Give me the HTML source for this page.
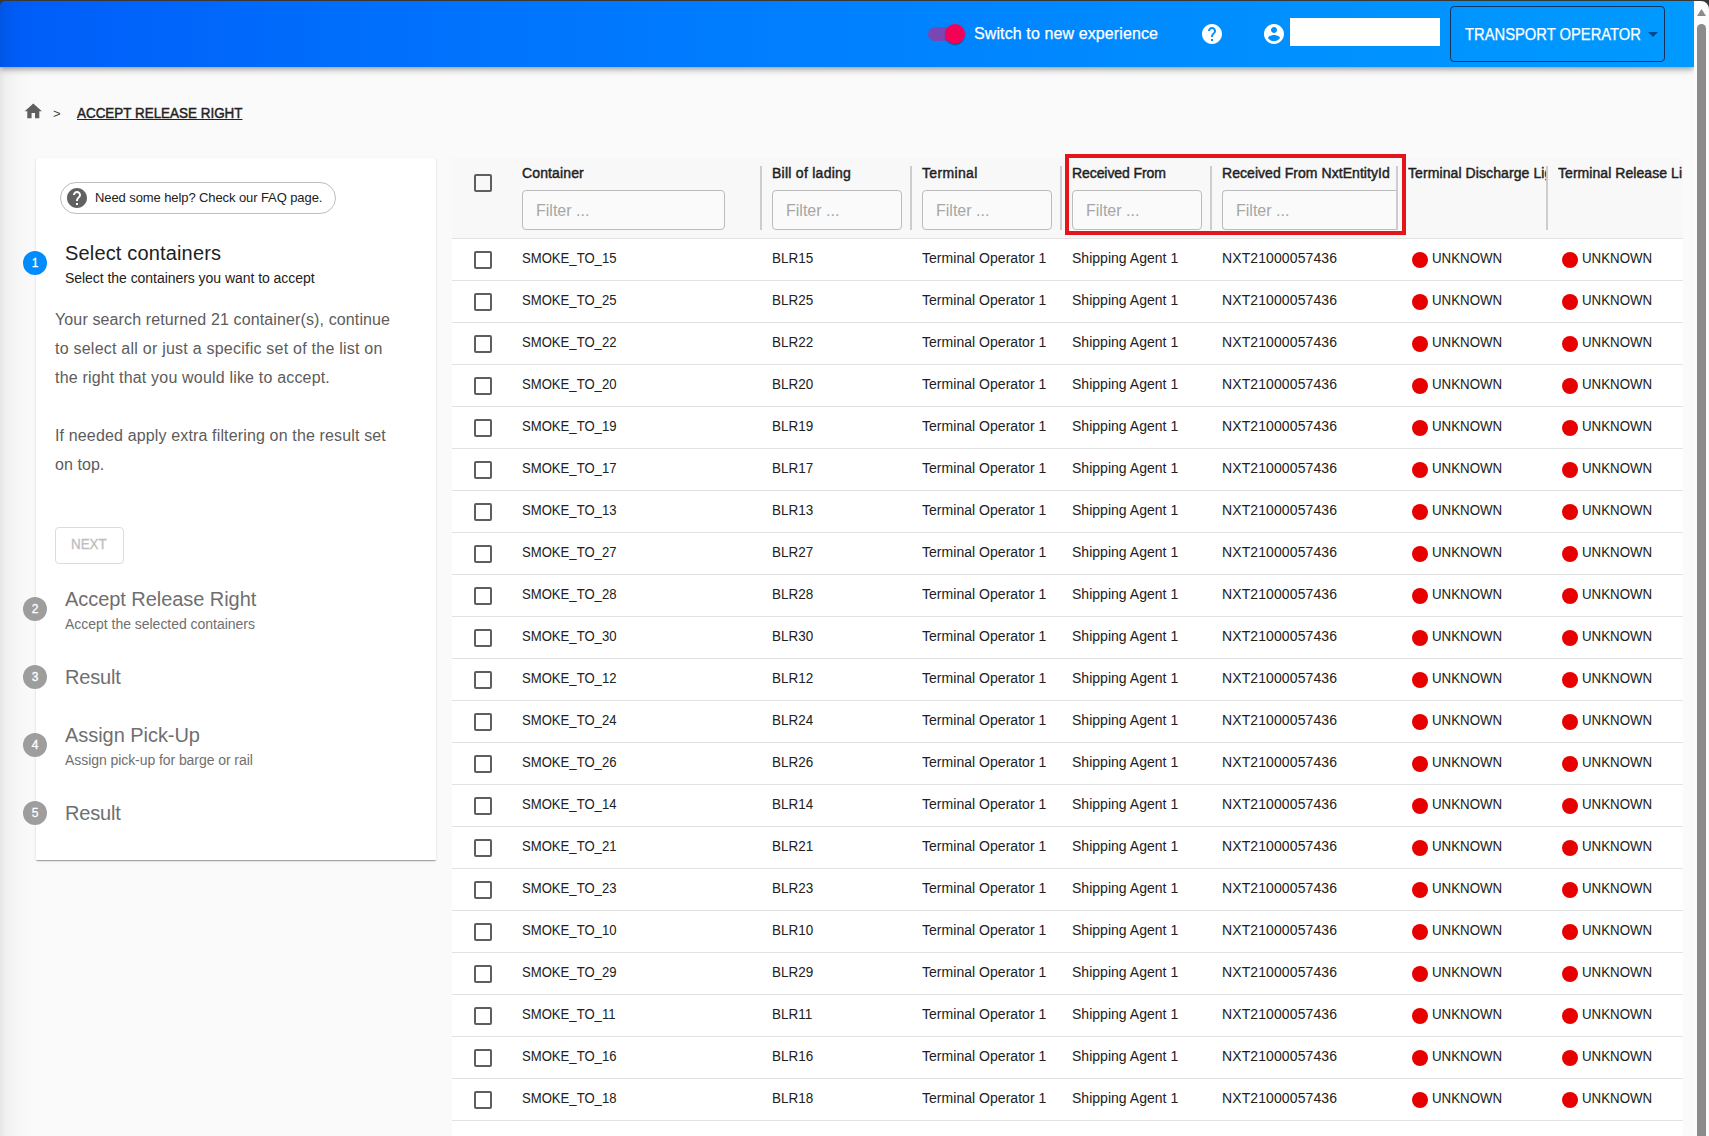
<!DOCTYPE html><html lang="en"><head><meta charset="utf-8"><title>Accept Release Right</title><style>
*{box-sizing:border-box;margin:0;padding:0}
html,body{width:1709px;height:1136px;overflow:hidden;background:#fafafa}
body{position:relative;font-family:"Liberation Sans",Arial,sans-serif;color:#212121;font-size:14px}
.abs{position:absolute}
.t{position:absolute;white-space:nowrap;line-height:1}
#hdr{left:0;top:0;width:1694px;height:67px;background:linear-gradient(90deg,#005df9 0%,#006ffc 22%,#007fff 47%,#008fff 74%,#009aff 100%);box-shadow:0 2px 4px -1px rgba(0,0,0,.2),0 4px 5px 0 rgba(0,0,0,.14),0 1px 10px 0 rgba(0,0,0,.12)}
#topline{left:0;top:0;width:1709px;height:1px;background:#3a3632;z-index:9}
#sb{left:1694px;top:0;width:15px;height:1136px;background:#fcfcfc;z-index:8}
#thumb{left:1697px;top:24px;width:9px;height:1120px;background:#8b8b8b;border-radius:5px;z-index:9}
#lshade{left:0;top:0;width:36px;height:1136px;background:linear-gradient(90deg,rgba(0,0,0,.085) 0,rgba(0,0,0,.045) 5px,rgba(0,0,0,.03) 10px,rgba(0,0,0,.013) 20px,rgba(0,0,0,0) 36px);z-index:7}
.w{color:#fff}
#panel{left:36px;top:158px;width:400px;height:702px;background:#fff;border-radius:4px 4px 0 0;box-shadow:0 2px 1px -1px rgba(0,0,0,.2),0 1px 1px 0 rgba(0,0,0,.14),0 1px 3px 0 rgba(0,0,0,.12)}
.circ{position:absolute;left:23px;width:24px;height:24px;border-radius:50%;background:#9e9e9e;color:#fff;font-size:12px;line-height:24px;text-align:center;-webkit-text-stroke:.3px #fff}
.g{color:#6f6f6f}
.p{color:#5c5c5c;font-size:16px}
#grid{left:452px;top:158px;width:1231px;height:978px;background:#fff;overflow:hidden}
#gh{left:0;top:0;width:1231px;height:81px;background:#f8f8f8;border-bottom:1px solid #e2e2e2}
.hl{position:absolute;-webkit-text-stroke:.45px #1f1f1f;font-size:14px;line-height:1;white-space:nowrap;color:#1f1f1f}
.sep{position:absolute;top:8px;width:2px;height:64px;background:#cdcdcd}
.fi{position:absolute;top:32px;height:40px;border:1px solid #bcbcbc;border-radius:4px;background:#fafafa;color:#a6a6a6;font-size:16px;line-height:40px;padding-left:13px;white-space:nowrap;overflow:hidden}
.cb{position:absolute;left:22px;width:18px;height:18px;border:2px solid #5e5e5e;border-radius:2px;background:#fff}
.row{position:absolute;left:0;width:1231px;height:42px;border-bottom:1px solid #e2e2e2}
.c{position:absolute;top:12px;font-size:14px;line-height:1;white-space:nowrap}
.dot{position:absolute;top:13px;width:16px;height:16px;border-radius:50%;background:#e60000}
#sw{letter-spacing:0.111px}#to{transform:scaleX(0.9221);transform-origin:0 0}#bc{transform:scaleX(0.9597);transform-origin:0 0}#chip{letter-spacing:-0.092px}#s1t{letter-spacing:0.161px}#s1s{letter-spacing:-0.046px}#p1{letter-spacing:0.125px}#p2{letter-spacing:0.234px}#p3{letter-spacing:0.182px}#p4{letter-spacing:0.147px}#p5{letter-spacing:0.060px}#nx{transform:scaleX(0.9560);transform-origin:0 0}#s2t{letter-spacing:-0.054px}#s2s{letter-spacing:-0.023px}#s3t{letter-spacing:-0.201px}#s4t{letter-spacing:-0.047px}#s4s{letter-spacing:-0.067px}#s5t{letter-spacing:-0.201px}.c0{transform:scaleX(0.9365);transform-origin:0 0}.c1{transform:scaleX(0.9623);transform-origin:0 0}.c2{letter-spacing:0.032px}.c3{letter-spacing:0.022px}.c4{letter-spacing:0.103px}.c5{transform:scaleX(0.9501);transform-origin:0 0}#h0{letter-spacing:0.125px}#h1{letter-spacing:0.262px}#h2{letter-spacing:0.342px}#h3{letter-spacing:-0.077px}#h4{letter-spacing:0.050px}#h5{letter-spacing:0.090px}#h6{letter-spacing:0.058px}</style></head><body>
<div id="hdr" class="abs"></div>
<div id="topline" class="abs"></div>
<svg class="abs" style="left:0;top:0;z-index:10" width="6" height="6"><path d="M0 0H6V1A5 5 0 0 0 0 6Z" fill="#3a3632"/></svg>
<svg class="abs" style="left:1700px;top:0;z-index:10" width="9" height="9"><path d="M0 0H9V9A8 8 0 0 0 1 1H0Z" fill="#363636"/></svg>
<div class="abs" style="left:928px;top:27px;width:36px;height:14px;border-radius:7px;background:#7a46b4"></div>
<div class="abs" style="left:945px;top:24px;width:20px;height:20px;border-radius:50%;background:#f50057;box-shadow:0 2px 1px -1px rgba(0,0,0,.2),0 1px 1px 0 rgba(0,0,0,.14),0 1px 3px 0 rgba(0,0,0,.12)"></div>
<div class="t w" id="sw" style="left:974px;top:26px;font-size:16px;-webkit-text-stroke:.25px #fff">Switch to new experience</div>
<svg class="abs" style="left:1200px;top:22px" width="24" height="24" viewBox="0 0 24 24"><path fill="#fff" d="M12 2C6.48 2 2 6.48 2 12s4.48 10 10 10 10-4.48 10-10S17.52 2 12 2zm1 17h-2v-2h2v2zm2.07-7.75l-.9.92C13.45 12.9 13 13.5 13 15h-2v-.5c0-1.1.45-2.100 1.170-2.830l1.240-1.260c.37-.36.59-.86.59-1.410 0-1.100-.9-2-2-2s-2 .9-2 2H8c0-2.210 1.790-4 4-4s4 1.790 4 4c0 .88-.36 1.680-.93 2.250z"/></svg>
<svg class="abs" style="left:1262px;top:22px" width="24" height="24" viewBox="0 0 24 24"><path fill="#fff" d="M12 2C6.48 2 2 6.48 2 12s4.48 10 10 10 10-4.48 10-10S17.52 2 12 2zm0 3c1.660 0 3 1.340 3 3s-1.340 3-3 3-3-1.340-3-3 1.340-3 3-3zm0 14.200c-2.500 0-4.710-1.280-6-3.220.03-1.990 4-3.080 6-3.080 1.990 0 5.970 1.090 6 3.080-1.290 1.940-3.500 3.220-6 3.220z"/></svg>
<div class="abs" style="left:1290px;top:18px;width:150px;height:28px;background:#fff"></div>
<div class="abs" style="left:1450px;top:6px;width:215px;height:56px;border:1px solid #15335f;border-radius:4px"></div>
<div class="t w" id="to" style="left:1465px;top:27px;font-size:16px;-webkit-text-stroke:.25px #fff">TRANSPORT OPERATOR</div>
<svg class="abs" style="left:1648px;top:32px" width="10" height="5"><path d="M0 0H10L5 5Z" fill="#004a8f"/></svg>
<div id="sb" class="abs"></div><div id="thumb" class="abs"></div>
<svg class="abs" style="left:1697px;top:9px;z-index:9" width="9" height="7"><path d="M0 7L4.5 0L9 7Z" fill="#8b8b8b"/></svg>
<div id="lshade" class="abs"></div>
<svg class="abs" style="left:23px;top:100.5px" width="20.6" height="20.6" viewBox="0 0 24 24"><path fill="#5f5f5f" d="M10 20v-6h4v6h5v-8h3L12 3 2 12h3v8z"/></svg>
<div class="t" style="left:53px;top:106.5px;font-size:13px;color:#444">&gt;</div>
<div class="t" id="bc" style="left:77px;top:106px;font-size:14px;-webkit-text-stroke:.45px #222;text-decoration:underline;color:#222">ACCEPT RELEASE RIGHT</div>
<div id="panel" class="abs"></div>
<div class="abs" style="left:60px;top:182px;width:276px;height:32px;border:1px solid #bdbdbd;border-radius:16px;background:#fff"></div>
<svg class="abs" style="left:65px;top:186px" width="24" height="24" viewBox="0 0 24 24"><path fill="#616161" d="M12 2C6.48 2 2 6.48 2 12s4.48 10 10 10 10-4.48 10-10S17.52 2 12 2zm1 17h-2v-2h2v2zm2.07-7.75l-.9.92C13.45 12.9 13 13.5 13 15h-2v-.5c0-1.1.45-2.100 1.170-2.830l1.240-1.260c.37-.36.59-.86.59-1.410 0-1.100-.9-2-2-2s-2 .9-2 2H8c0-2.210 1.790-4 4-4s4 1.790 4 4c0 .88-.36 1.680-.93 2.250z"/></svg>
<div class="t" id="chip" style="left:95px;top:191px;font-size:13px">Need some help? Check our FAQ page.</div>
<div class="circ" style="top:251px;background:#008cff">1</div>
<div class="t" id="s1t" style="left:65px;top:243px;font-size:20px">Select containers</div>
<div class="t" id="s1s" style="left:65px;top:271px;font-size:14px">Select the containers you want to accept</div>
<div class="t p" id="p1" style="left:55px;top:312px">Your search returned 21 container(s), continue</div>
<div class="t p" id="p2" style="left:55px;top:341px">to select all or just a specific set of the list on</div>
<div class="t p" id="p3" style="left:55px;top:370px">the right that you would like to accept.</div>
<div class="t p" id="p4" style="left:55px;top:428px">If needed apply extra filtering on the result set</div>
<div class="t p" id="p5" style="left:55px;top:457px">on top.</div>
<div class="abs" style="left:55px;top:527px;width:69px;height:37px;border:1px solid #dcdcdc;border-radius:4px"></div>
<div class="t" id="nx" style="left:71px;top:537px;font-size:14px;-webkit-text-stroke:.3px #bdbdbd;color:#bdbdbd">NEXT</div>
<div class="circ" style="top:597px">2</div>
<div class="t g" id="s2t" style="left:65px;top:589px;font-size:20px">Accept Release Right</div>
<div class="t g" id="s2s" style="left:65px;top:617px;font-size:14px">Accept the selected containers</div>
<div class="circ" style="top:665px">3</div>
<div class="t g" id="s3t" style="left:65px;top:667px;font-size:20px">Result</div>
<div class="circ" style="top:733px">4</div>
<div class="t g" id="s4t" style="left:65px;top:725px;font-size:20px">Assign Pick-Up</div>
<div class="t g" id="s4s" style="left:65px;top:753px;font-size:14px">Assign pick-up for barge or rail</div>
<div class="circ" style="top:801px">5</div>
<div class="t g" id="s5t" style="left:65px;top:803px;font-size:20px">Result</div>
<div id="grid" class="abs">
<div id="gh" class="abs">
<div class="cb" style="top:16px;background:#f8f8f8"></div>
<div class="hl" id="h0" style="left:70px;top:8px">Container</div>
<div class="fi" style="left:70px;width:203px">Filter ...</div>
<div class="sep" style="left:308px"></div>
<div class="hl" id="h1" style="left:320px;top:8px">Bill of lading</div>
<div class="fi" style="left:320px;width:130px">Filter ...</div>
<div class="sep" style="left:458px"></div>
<div class="hl" id="h2" style="left:470px;top:8px">Terminal</div>
<div class="fi" style="left:470px;width:130px">Filter ...</div>
<div class="sep" style="left:608px"></div>
<div class="hl" id="h3" style="left:620px;top:8px">Received From</div>
<div class="fi" style="left:620px;width:130px">Filter ...</div>
<div class="sep" style="left:758px"></div>
<div class="hl" id="h4" style="left:770px;top:8px">Received From NxtEntityId</div>
<div class="fi" style="left:770px;width:175px;border-right:0;border-radius:4px 0 0 4px">Filter ...</div>
<div class="sep" style="left:944px"></div>
<div class="abs" style="left:956px;top:4px;width:138px;height:24px;overflow:hidden"><div class="hl" style="left:0;top:4px"><span id="h5">Terminal Discharge Li</span><span>ght</span></div></div>
<div class="sep" style="left:1094px"></div>
<div class="abs" style="left:1106px;top:4px;width:124px;height:24px;overflow:hidden"><div class="hl" style="left:0;top:4px"><span id="h6">Terminal Release Li</span><span>ght</span></div></div>
</div>
<div class="row" style="top:81px"><div class="cb" style="top:12px"></div><div class="c c0" style="left:70px">SMOKE_TO_15</div><div class="c c1" style="left:320px">BLR15</div><div class="c c2" style="left:470px">Terminal Operator 1</div><div class="c c3" style="left:620px">Shipping Agent 1</div><div class="c c4" style="left:770px">NXT21000057436</div><div class="dot" style="left:960px"></div><div class="c c5" style="left:980px">UNKNOWN</div><div class="dot" style="left:1110px"></div><div class="c c5" style="left:1130px">UNKNOWN</div></div>
<div class="row" style="top:123px"><div class="cb" style="top:12px"></div><div class="c c0" style="left:70px">SMOKE_TO_25</div><div class="c c1" style="left:320px">BLR25</div><div class="c c2" style="left:470px">Terminal Operator 1</div><div class="c c3" style="left:620px">Shipping Agent 1</div><div class="c c4" style="left:770px">NXT21000057436</div><div class="dot" style="left:960px"></div><div class="c c5" style="left:980px">UNKNOWN</div><div class="dot" style="left:1110px"></div><div class="c c5" style="left:1130px">UNKNOWN</div></div>
<div class="row" style="top:165px"><div class="cb" style="top:12px"></div><div class="c c0" style="left:70px">SMOKE_TO_22</div><div class="c c1" style="left:320px">BLR22</div><div class="c c2" style="left:470px">Terminal Operator 1</div><div class="c c3" style="left:620px">Shipping Agent 1</div><div class="c c4" style="left:770px">NXT21000057436</div><div class="dot" style="left:960px"></div><div class="c c5" style="left:980px">UNKNOWN</div><div class="dot" style="left:1110px"></div><div class="c c5" style="left:1130px">UNKNOWN</div></div>
<div class="row" style="top:207px"><div class="cb" style="top:12px"></div><div class="c c0" style="left:70px">SMOKE_TO_20</div><div class="c c1" style="left:320px">BLR20</div><div class="c c2" style="left:470px">Terminal Operator 1</div><div class="c c3" style="left:620px">Shipping Agent 1</div><div class="c c4" style="left:770px">NXT21000057436</div><div class="dot" style="left:960px"></div><div class="c c5" style="left:980px">UNKNOWN</div><div class="dot" style="left:1110px"></div><div class="c c5" style="left:1130px">UNKNOWN</div></div>
<div class="row" style="top:249px"><div class="cb" style="top:12px"></div><div class="c c0" style="left:70px">SMOKE_TO_19</div><div class="c c1" style="left:320px">BLR19</div><div class="c c2" style="left:470px">Terminal Operator 1</div><div class="c c3" style="left:620px">Shipping Agent 1</div><div class="c c4" style="left:770px">NXT21000057436</div><div class="dot" style="left:960px"></div><div class="c c5" style="left:980px">UNKNOWN</div><div class="dot" style="left:1110px"></div><div class="c c5" style="left:1130px">UNKNOWN</div></div>
<div class="row" style="top:291px"><div class="cb" style="top:12px"></div><div class="c c0" style="left:70px">SMOKE_TO_17</div><div class="c c1" style="left:320px">BLR17</div><div class="c c2" style="left:470px">Terminal Operator 1</div><div class="c c3" style="left:620px">Shipping Agent 1</div><div class="c c4" style="left:770px">NXT21000057436</div><div class="dot" style="left:960px"></div><div class="c c5" style="left:980px">UNKNOWN</div><div class="dot" style="left:1110px"></div><div class="c c5" style="left:1130px">UNKNOWN</div></div>
<div class="row" style="top:333px"><div class="cb" style="top:12px"></div><div class="c c0" style="left:70px">SMOKE_TO_13</div><div class="c c1" style="left:320px">BLR13</div><div class="c c2" style="left:470px">Terminal Operator 1</div><div class="c c3" style="left:620px">Shipping Agent 1</div><div class="c c4" style="left:770px">NXT21000057436</div><div class="dot" style="left:960px"></div><div class="c c5" style="left:980px">UNKNOWN</div><div class="dot" style="left:1110px"></div><div class="c c5" style="left:1130px">UNKNOWN</div></div>
<div class="row" style="top:375px"><div class="cb" style="top:12px"></div><div class="c c0" style="left:70px">SMOKE_TO_27</div><div class="c c1" style="left:320px">BLR27</div><div class="c c2" style="left:470px">Terminal Operator 1</div><div class="c c3" style="left:620px">Shipping Agent 1</div><div class="c c4" style="left:770px">NXT21000057436</div><div class="dot" style="left:960px"></div><div class="c c5" style="left:980px">UNKNOWN</div><div class="dot" style="left:1110px"></div><div class="c c5" style="left:1130px">UNKNOWN</div></div>
<div class="row" style="top:417px"><div class="cb" style="top:12px"></div><div class="c c0" style="left:70px">SMOKE_TO_28</div><div class="c c1" style="left:320px">BLR28</div><div class="c c2" style="left:470px">Terminal Operator 1</div><div class="c c3" style="left:620px">Shipping Agent 1</div><div class="c c4" style="left:770px">NXT21000057436</div><div class="dot" style="left:960px"></div><div class="c c5" style="left:980px">UNKNOWN</div><div class="dot" style="left:1110px"></div><div class="c c5" style="left:1130px">UNKNOWN</div></div>
<div class="row" style="top:459px"><div class="cb" style="top:12px"></div><div class="c c0" style="left:70px">SMOKE_TO_30</div><div class="c c1" style="left:320px">BLR30</div><div class="c c2" style="left:470px">Terminal Operator 1</div><div class="c c3" style="left:620px">Shipping Agent 1</div><div class="c c4" style="left:770px">NXT21000057436</div><div class="dot" style="left:960px"></div><div class="c c5" style="left:980px">UNKNOWN</div><div class="dot" style="left:1110px"></div><div class="c c5" style="left:1130px">UNKNOWN</div></div>
<div class="row" style="top:501px"><div class="cb" style="top:12px"></div><div class="c c0" style="left:70px">SMOKE_TO_12</div><div class="c c1" style="left:320px">BLR12</div><div class="c c2" style="left:470px">Terminal Operator 1</div><div class="c c3" style="left:620px">Shipping Agent 1</div><div class="c c4" style="left:770px">NXT21000057436</div><div class="dot" style="left:960px"></div><div class="c c5" style="left:980px">UNKNOWN</div><div class="dot" style="left:1110px"></div><div class="c c5" style="left:1130px">UNKNOWN</div></div>
<div class="row" style="top:543px"><div class="cb" style="top:12px"></div><div class="c c0" style="left:70px">SMOKE_TO_24</div><div class="c c1" style="left:320px">BLR24</div><div class="c c2" style="left:470px">Terminal Operator 1</div><div class="c c3" style="left:620px">Shipping Agent 1</div><div class="c c4" style="left:770px">NXT21000057436</div><div class="dot" style="left:960px"></div><div class="c c5" style="left:980px">UNKNOWN</div><div class="dot" style="left:1110px"></div><div class="c c5" style="left:1130px">UNKNOWN</div></div>
<div class="row" style="top:585px"><div class="cb" style="top:12px"></div><div class="c c0" style="left:70px">SMOKE_TO_26</div><div class="c c1" style="left:320px">BLR26</div><div class="c c2" style="left:470px">Terminal Operator 1</div><div class="c c3" style="left:620px">Shipping Agent 1</div><div class="c c4" style="left:770px">NXT21000057436</div><div class="dot" style="left:960px"></div><div class="c c5" style="left:980px">UNKNOWN</div><div class="dot" style="left:1110px"></div><div class="c c5" style="left:1130px">UNKNOWN</div></div>
<div class="row" style="top:627px"><div class="cb" style="top:12px"></div><div class="c c0" style="left:70px">SMOKE_TO_14</div><div class="c c1" style="left:320px">BLR14</div><div class="c c2" style="left:470px">Terminal Operator 1</div><div class="c c3" style="left:620px">Shipping Agent 1</div><div class="c c4" style="left:770px">NXT21000057436</div><div class="dot" style="left:960px"></div><div class="c c5" style="left:980px">UNKNOWN</div><div class="dot" style="left:1110px"></div><div class="c c5" style="left:1130px">UNKNOWN</div></div>
<div class="row" style="top:669px"><div class="cb" style="top:12px"></div><div class="c c0" style="left:70px">SMOKE_TO_21</div><div class="c c1" style="left:320px">BLR21</div><div class="c c2" style="left:470px">Terminal Operator 1</div><div class="c c3" style="left:620px">Shipping Agent 1</div><div class="c c4" style="left:770px">NXT21000057436</div><div class="dot" style="left:960px"></div><div class="c c5" style="left:980px">UNKNOWN</div><div class="dot" style="left:1110px"></div><div class="c c5" style="left:1130px">UNKNOWN</div></div>
<div class="row" style="top:711px"><div class="cb" style="top:12px"></div><div class="c c0" style="left:70px">SMOKE_TO_23</div><div class="c c1" style="left:320px">BLR23</div><div class="c c2" style="left:470px">Terminal Operator 1</div><div class="c c3" style="left:620px">Shipping Agent 1</div><div class="c c4" style="left:770px">NXT21000057436</div><div class="dot" style="left:960px"></div><div class="c c5" style="left:980px">UNKNOWN</div><div class="dot" style="left:1110px"></div><div class="c c5" style="left:1130px">UNKNOWN</div></div>
<div class="row" style="top:753px"><div class="cb" style="top:12px"></div><div class="c c0" style="left:70px">SMOKE_TO_10</div><div class="c c1" style="left:320px">BLR10</div><div class="c c2" style="left:470px">Terminal Operator 1</div><div class="c c3" style="left:620px">Shipping Agent 1</div><div class="c c4" style="left:770px">NXT21000057436</div><div class="dot" style="left:960px"></div><div class="c c5" style="left:980px">UNKNOWN</div><div class="dot" style="left:1110px"></div><div class="c c5" style="left:1130px">UNKNOWN</div></div>
<div class="row" style="top:795px"><div class="cb" style="top:12px"></div><div class="c c0" style="left:70px">SMOKE_TO_29</div><div class="c c1" style="left:320px">BLR29</div><div class="c c2" style="left:470px">Terminal Operator 1</div><div class="c c3" style="left:620px">Shipping Agent 1</div><div class="c c4" style="left:770px">NXT21000057436</div><div class="dot" style="left:960px"></div><div class="c c5" style="left:980px">UNKNOWN</div><div class="dot" style="left:1110px"></div><div class="c c5" style="left:1130px">UNKNOWN</div></div>
<div class="row" style="top:837px"><div class="cb" style="top:12px"></div><div class="c c0" style="left:70px">SMOKE_TO_11</div><div class="c c1" style="left:320px">BLR11</div><div class="c c2" style="left:470px">Terminal Operator 1</div><div class="c c3" style="left:620px">Shipping Agent 1</div><div class="c c4" style="left:770px">NXT21000057436</div><div class="dot" style="left:960px"></div><div class="c c5" style="left:980px">UNKNOWN</div><div class="dot" style="left:1110px"></div><div class="c c5" style="left:1130px">UNKNOWN</div></div>
<div class="row" style="top:879px"><div class="cb" style="top:12px"></div><div class="c c0" style="left:70px">SMOKE_TO_16</div><div class="c c1" style="left:320px">BLR16</div><div class="c c2" style="left:470px">Terminal Operator 1</div><div class="c c3" style="left:620px">Shipping Agent 1</div><div class="c c4" style="left:770px">NXT21000057436</div><div class="dot" style="left:960px"></div><div class="c c5" style="left:980px">UNKNOWN</div><div class="dot" style="left:1110px"></div><div class="c c5" style="left:1130px">UNKNOWN</div></div>
<div class="row" style="top:921px"><div class="cb" style="top:12px"></div><div class="c c0" style="left:70px">SMOKE_TO_18</div><div class="c c1" style="left:320px">BLR18</div><div class="c c2" style="left:470px">Terminal Operator 1</div><div class="c c3" style="left:620px">Shipping Agent 1</div><div class="c c4" style="left:770px">NXT21000057436</div><div class="dot" style="left:960px"></div><div class="c c5" style="left:980px">UNKNOWN</div><div class="dot" style="left:1110px"></div><div class="c c5" style="left:1130px">UNKNOWN</div></div>
</div>
<div class="abs" style="left:1065px;top:154px;width:341px;height:81px;border:4px solid #e3171b"></div>
</body></html>
